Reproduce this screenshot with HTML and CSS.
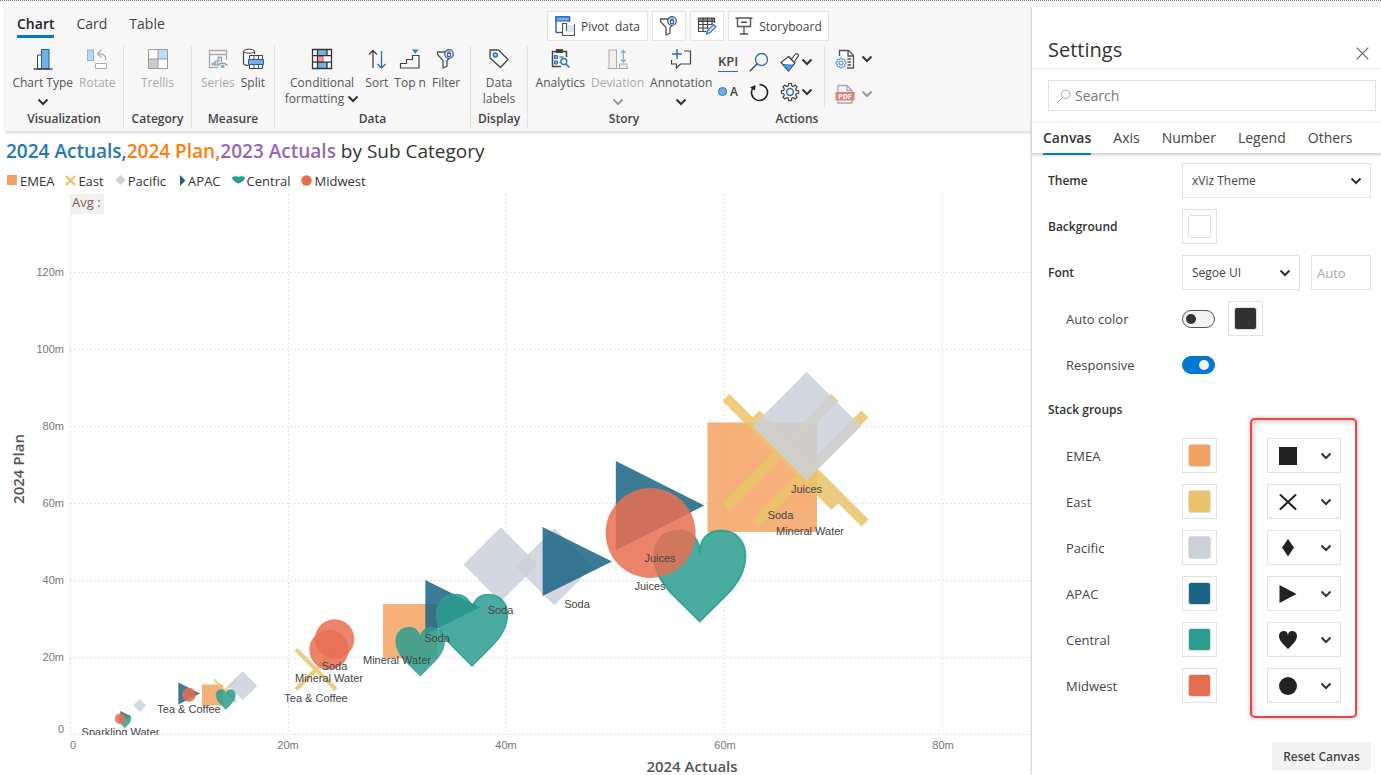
FILE: index.html
```html
<!DOCTYPE html>
<html lang="en">
<head>
<meta charset="utf-8">
<title>Chart settings</title>
<link rel="stylesheet" href="styles.css">
</head>
<body>
<svg class="defs" aria-hidden="true">
  <symbol id="chevron" viewBox="0 0 12 8"><path d="M1.500 1.500 6 6l4.500-4.500" fill="none" stroke="currentColor" stroke-width="2"/></symbol>
  <symbol id="lens" viewBox="0 0 20 20"><circle cx="12.500" cy="7.500" r="6" fill="none" stroke="var(--lens, #2b6cc4)" stroke-width="1.300"/><path d="M8.200 11.800.800 19.200" fill="none" stroke="currentColor" stroke-width="1.300"/></symbol>
  <symbol id="funnel" viewBox="0 0 20 20"><path d="M9 3H1.500v2.500L7 11.500V19l4-2v-5.500l2-2" fill="none" stroke="#555" stroke-width="1.300"/><circle cx="13" cy="5" r="4.300" fill="#dbe9f8" stroke="#555" stroke-width="1.200"/><path d="M11.500 4.500h3v3h-3zM12 4.500V3h2v1.500" fill="none" stroke="#2b6cc4" stroke-width="1.100"/></symbol>
  <symbol id="gear" viewBox="0 0 20 20"><path d="M8.700 1.500h2.600l.4 2.300 1.600.7 1.900-1.400 1.800 1.800-1.300 1.900.6 1.600 2.300.4v2.500l-2.300.4-.6 1.600 1.300 1.900-1.800 1.800-1.900-1.300-1.600.6-.4 2.300H8.700l-.4-2.300-1.600-.6L4.800 17 3 15.200l1.300-1.900-.6-1.600-2.300-.4V8.800l2.300-.4.6-1.600L3 4.900l1.800-1.800 1.900 1.400 1.600-.7z" fill="none" stroke="var(--gear, #444)" stroke-width="1.200"/><circle cx="10" cy="10" r="3.400" fill="none" stroke="#2b6cc4" stroke-width="1.500"/></symbol>
  <symbol id="heart" viewBox="0 0 100 100" overflow="visible" preserveAspectRatio="none"><path d="M50 25C50 10 58 0 73 0 90 0 100 12 100 28 100 48 87 64 75 75L50 100 25 75C13 64 0 48 0 28 0 12 10 0 27 0 42 0 50 10 50 25Z"/></symbol>
</svg>
<div class="page">
  <main class="report">
    <header class="ribbon">
      <div class="ribbon-top">
        <nav class="tabs">
          <button class="tab active">Chart</button>
          <button class="tab">Card</button>
          <button class="tab">Table</button>
        </nav>
        <div class="quick">
          <button class="quick-btn wide">
            <svg width="20" height="20" viewBox="0 0 20 20"><path d="M1 16.500V1h13.500v5" fill="#fff" stroke="#1f5fae" stroke-width="1.400"/><path d="M1 1h13.500v4H1z" fill="#6fb0e8" stroke="#1f5fae" stroke-width="1.200"/><path d="M1 16.500h6" stroke="#1f5fae" stroke-width="1.400"/><path d="M7.500 7.500h4v7h8v5h-12z" fill="#fff" stroke="#555" stroke-width="1.200"/><path d="M12 9h7v7h-7z" fill="#d5e8f8"/><path d="M19.500 8v11.500" stroke="#555"/></svg>
            <span>Pivot&nbsp; data</span>
          </button>
          <button class="quick-btn" aria-label="Filter"><svg width="20" height="20"><use href="#funnel"/></svg></button>
          <button class="quick-btn" aria-label="Edit table"><svg width="20" height="20" viewBox="0 0 20 20"><path d="M1.500 2h16v3.500h-16z" fill="#888"/><path d="M1.500 2v13.500h8M6 2v13.500M10.500 2v11M15 2v6M17.500 2v5M1.500 8.500h14M1.500 12h10M1.500 2h16M1.500 5.500h16" fill="none" stroke="#444" stroke-width="1.200"/><path d="m9.500 18 1-3.500 6-6 2.300 2.300-6 6z" fill="#cfe3f8" stroke="#2b6cc4" stroke-width="1.200"/></svg></button>
          <button class="quick-btn wide">
            <svg width="18" height="20" viewBox="0 0 18 20"><path d="M.5 2h17M2.500 2v8.500h13V2M9 10.500V18M5 18h8M6 6.300h6" fill="none" stroke="#555" stroke-width="1.400"/></svg>
            <span>Storyboard</span>
          </button>
        </div>
      </div>
      <div class="groups">
        <section class="group visualization">
          <div class="items">
            <button class="item"><svg width="20" height="22" viewBox="0 0 20 22"><path d="M4.500 7h4v14h-4z" fill="#fff" stroke="#444"/><path d="M8.500 1.500h7.500V21H8.500z" fill="#6fb0e8" stroke="#1f5fae"/><path d="M.5 21h19" stroke="#333" stroke-width="1.300"/></svg><span>Chart Type</span><svg class="chev"><use href="#chevron"/></svg></button>
            <button class="item off"><svg width="22" height="22" viewBox="0 0 22 22"><path d="M1.500 2h6v10.500h-6z" fill="#b9d8f2" stroke="#86b2dc"/><path d="M9.500 15.500h11v5h-11z" fill="#fff" stroke="#aaa"/><path d="M19.500 12c1-4-2-6.500-8-6.500m4-4-4 4 4 4" fill="none" stroke="#aaa" stroke-width="1.200"/></svg><span>Rotate</span></button>
          </div>
          <h2>Visualization</h2>
        </section>
        <section class="group category">
          <div class="items">
            <button class="item off"><svg width="22" height="22" viewBox="0 0 22 22"><path d="M1.500 1.500h19v19h-19z" fill="#fff"/><path d="M11 1.500h9.500V11H11z" fill="#c3ddf4"/><path d="M1.500 11H11v9.500H1.500z" fill="#ccc"/><path d="M1.500 1.500h19v19h-19zM11 1.500v19M1.500 11h19" fill="none" stroke="#999"/></svg><span>Trellis</span></button>
          </div>
          <h2>Category</h2>
        </section>
        <section class="group measure">
          <div class="items">
            <button class="item off"><svg width="22" height="22" viewBox="0 0 22 22"><path d="M19.500 12V2.500h-17v17H11M2.500 6.500h17" fill="none" stroke="#aaa" stroke-width="1.300"/><path d="M5 17v-2h3v2zM8 17v-4h3v4zM11 13v-4h3.500v5" fill="#c3ddf4" stroke="#8a9db0"/><path d="M11 17.500c2.500-3 7-3 9.500 0" fill="none" stroke="#999" stroke-width="1.300"/><circle cx="15.800" cy="18.500" r="1.800" fill="#7ba9d8"/></svg><span>Series</span></button>
            <button class="item"><svg width="22" height="22" viewBox="0 0 22 22"><path d="M1.500 3v12c0 1.500 1.500 2.500 5 2.500M12.500 3v3" fill="none" stroke="#444" stroke-width="1.200"/><ellipse cx="7" cy="3.200" rx="5.500" ry="2" fill="#fff" stroke="#444"/><path d="M7.500 7.500h13v13h-13z" fill="#fff" stroke="#444"/><path d="M12 7.500v13M16.500 7.500v13" stroke="#444"/><path d="M6.500 11.500h15v5h-15z" fill="#6fb0e8" stroke="#1f5fae"/></svg><span>Split</span></button>
          </div>
          <h2>Measure</h2>
        </section>
        <section class="group data">
          <div class="items">
            <button class="item"><svg width="22" height="22" viewBox="0 0 22 22"><path d="M1.500 1.500h19v19h-19z" fill="#fff"/><path d="M6.500 1.500h9.500v6H6.500zM6.500 14h9.500v6.500H6.500z" fill="#6fb4e8"/><path d="M6.500 8H12v6H6.500z" fill="#f59a9a" stroke="#e04848"/><path d="M1.500 1.500h19v19h-19zM1.500 7.700h19M1.500 14.200h19M6.500 1.500v19M16 1.500v6M16 14v6.500" fill="none" stroke="#333" stroke-width="1.300"/></svg><span>Conditional<br>formatting <svg class="chev"><use href="#chevron"/></svg></span></button>
            <button class="item"><svg width="18" height="22" viewBox="0 0 18 22"><path d="M5 20V2.500M1 6.500l4-4 4 4" fill="none" stroke="#444" stroke-width="1.300"/><path d="M13.500 3v17M9.500 16l4 4 4-4" fill="none" stroke="#2b6cc4" stroke-width="1.300"/></svg><span>Sort</span></button>
            <button class="item"><svg width="22" height="22" viewBox="0 0 22 22"><path d="M1.500 20v-4.500h6v-4h6v-4H20V20z" fill="none" stroke="#444" stroke-width="1.200"/><path d="M13 1.500h6.500l-3.200 4.300z" fill="#2b7ad0"/></svg><span>Top n</span></button>
            <button class="item"><svg width="20" height="22"><use href="#funnel"/></svg><span>Filter</span></button>
          </div>
          <h2>Data</h2>
        </section>
        <section class="group display">
          <div class="items">
            <button class="item"><svg width="22" height="22" viewBox="0 0 22 22"><path d="M2 2h8.500l9.500 9.500-7.500 8L2 10z" fill="none" stroke="#444" stroke-width="1.300" stroke-linejoin="round"/><circle cx="7.300" cy="7" r="2" fill="#9cc8f0" stroke="#2b6cc4" stroke-width="1.300"/></svg><span>Data<br>labels</span></button>
          </div>
          <h2>Display</h2>
        </section>
        <section class="group story">
          <div class="items">
            <button class="item"><svg width="22" height="22" viewBox="0 0 22 22"><path d="M17.500 9V3.500H3.500v15H12" fill="none" stroke="#444" stroke-width="1.500"/><path d="M7 1h7v4H7z" fill="#444"/><path d="M5.500 7.500h3v3h-3zM5.500 13h3v3h-3z" fill="#6fb0e8" stroke="#2b6cc4"/><path d="M10.500 9h4M10.500 14.500h1" stroke="#444" stroke-width="1.200"/><circle cx="14.800" cy="13.500" r="3" fill="#fff" stroke="#2b6cc4" stroke-width="1.300"/><path d="m17 16 3.500 3.500" stroke="#2b6cc4" stroke-width="1.500"/></svg><span>Analytics</span></button>
            <button class="item off"><svg width="22" height="22" viewBox="0 0 22 22"><path d="M2 2h7.500v18.500H2z" fill="#f0f0f0" stroke="#aaa"/><path d="M12.500 16h7.500v4.500h-7.500z" fill="#f0f0f0" stroke="#aaa"/><path d="M.5 20.500h21" stroke="#aaa"/><path d="M16.300 3v10.500M14 5l2.300-2.500L18.600 5M14 11.500l2.300 2.500 2.300-2.500" fill="none" stroke="#7ba9d8" stroke-width="1.200"/></svg><span>Deviation</span><svg class="chev"><use href="#chevron"/></svg></button>
            <button class="item"><svg width="22" height="22" viewBox="0 0 22 22"><path d="M14 3h6.500v13H10.500l-4 4v-4H1.500V12" fill="none" stroke="#444" stroke-width="1.200"/><path d="M7 1v10M2 6h10" stroke="#2b6cc4" stroke-width="1.400"/></svg><span>Annotation</span><svg class="chev"><use href="#chevron"/></svg></button>
          </div>
          <h2>Story</h2>
        </section>
        <section class="group actions">
          <div class="action-row">
            <div class="action-grid">
              <button class="kpi">KPI</button>
              <button class="act" aria-label="Zoom"><svg width="20" height="20"><use href="#lens"/></svg></button>
              <button class="act split" aria-label="Format"><svg width="20" height="20" viewBox="0 0 20 20"><path d="M1 10.500 8.500 4.500 15 11l-6.500 8z" fill="#fff" stroke="#444" stroke-width="1.200"/><path d="m2.500 12.500 10.800.7L8.500 19z" fill="#4f9be0" stroke="#2b6cc4"/><path d="m11.500 7 4-5c1-1.300 3.800.7 2.800 2.200L14.500 9.500M8.500 4.500 15 11" fill="#fff" stroke="#444" stroke-width="1.200"/></svg><svg class="chev"><use href="#chevron"/></svg></button>
              <button class="dot-a"><i></i>A</button>
              <button class="act" aria-label="Reset"><svg width="20" height="20" viewBox="0 0 20 20"><path d="M4.500 5.200A8 8 0 1 0 10.500 2.500" fill="none" stroke="#222" stroke-width="1.600"/><path d="M1 5.500 6.500 3l-.5 5.500z" fill="#222"/></svg></button>
              <button class="act split" aria-label="Options"><svg width="20" height="20"><use href="#gear"/></svg><svg class="chev"><use href="#chevron"/></svg></button>
            </div>
            <div class="export">
              <button class="act split" aria-label="Page options"><svg width="20" height="20" viewBox="0 0 20 20"><path d="M4.500 7V1.500h9l5 5v12.500H12M13 1.500v5.500h5.500M12.500 10H16M12.500 13H16M12.500 16H16" fill="none" stroke="#555" stroke-width="1.300"/><svg class="small-gear" x="0" y="8" width="12" height="12"><use href="#gear"/></svg></svg><svg class="chev"><use href="#chevron"/></svg></button>
              <button class="act split off" aria-label="Export PDF"><svg width="20" height="20" viewBox="0 0 20 20"><path d="M3 8V1.500h9l5 5V8M12 1.500v5h5M3 16v3h14v-3" fill="none" stroke="#aaa" stroke-width="1.300"/><path d="M.5 8h19v8.500H.5z" fill="#e0827a"/><text x="10" y="15" class="pdf">PDF</text></svg><svg class="chev"><use href="#chevron"/></svg></button>
            </div>
          </div>
          <h2>Actions</h2>
        </section>
      </div>
    </header>

    <h1 class="title"><b class="blue">2024 Actuals,</b><b class="orange">2024 Plan,</b><b class="purple">2023 Actuals</b> by Sub Category</h1>
    <ul class="legend">
      <li><svg width="11" height="11" viewBox="0 0 11 11"><path d="M0 0h10v10H0z" fill="#f4a261"/></svg>EMEA</li>
      <li><svg width="11" height="11" viewBox="0 0 11 11"><path d="m1 1 9 9M10 1l-9 9" stroke="#e9c46a" stroke-width="2.400"/></svg>East</li>
      <li><svg width="11" height="11" viewBox="0 0 11 11"><path d="m5.500 0 5 5-5 5-5-5z" fill="#cbd0d9"/></svg>Pacific</li>
      <li class="late"><svg width="7" height="11" viewBox="0 0 7 11"><path d="m1 0 5.500 5.500L1 11z" fill="#1a6484"/></svg>APAC</li>
      <li><svg width="13" height="11" viewBox="0 0 13 11"><path d="M6.500 2C7.500 1.200 11 1 13 2.200c0 3-3.500 5-6.500 6.300C3.500 7.200 0 5.200 0 2.200 2 1 5.500 1.200 6.500 2z" fill="#2a9d8f"/></svg>Central</li>
      <li><svg width="11" height="11" viewBox="0 0 11 11"><circle cx="5.500" cy="5.500" r="5.200" fill="#e76f51"/></svg>Midwest</li>
    </ul>

    <svg class="chart" viewBox="0 194 1032 580" role="img" aria-label="2024 Plan against 2024 Actuals by sub category">
      <defs><clipPath id="plot"><rect x="70" y="194" width="962" height="541"/></clipPath></defs>
      <path class="grid" d="M70.500 194V735M288.500 194V735M506.500 194V735M724.500 194V735M942.500 194V735M70 272.500H1032M70 349.500H1032M70 426.500H1032M70 503.500H1032M70 580.500H1032M70 657.500H1032M70 734.500H1032"/>
      <rect x="70" y="194" width="34" height="20" fill="#f2f1f1"/>
      <text x="72" y="207" class="avg">Avg :</text>
      <g class="tick end">
        <text x="64" y="276">120m</text><text x="64" y="353">100m</text><text x="64" y="430">80m</text><text x="64" y="507">60m</text><text x="64" y="584">40m</text><text x="64" y="661">20m</text><text x="64" y="733">0</text>
      </g>
      <g class="tick mid">
        <text x="73" y="749">0</text><text x="288" y="749">20m</text><text x="506" y="749">40m</text><text x="725" y="749">60m</text><text x="943" y="749">80m</text>
      </g>
      <text class="axis" x="692" y="772">2024 Actuals</text>
      <text class="axis" transform="translate(24 469) rotate(-90)">2024 Plan</text>
      <g class="marks">
        <path class="emea" d="M202 684.500h21v21h-21zM383 604h54.500v54.500H383zM707.500 422.500h109.500V532H707.500z"/>
        <path class="east x2" d="m214 679.500 22 22m0-22-22 22"/>
        <path class="east x4" d="m296 649.500 40 40m0-40-40 40"/>
        <path class="east x10" d="m726 397.500 109 109m0-109-109 109"/>
        <path class="east x10" d="m756 414 109 109m0-109-109 109"/>
        <path class="pacific" d="m139.700 699 6.500 6.500-6.500 6.500-6.500-6.500z"/>
        <path class="pacific" d="m242.700 671.200 14.500 14.500-14.500 14.500-14.500-14.500z"/>
        <path class="pacific" d="m500.700 527.300 37.200 37.200-37.200 37.200-37.200-37.200z"/>
        <path class="pacific" d="m554.300 528.200 38.600 38.600-38.600 38.600-38.600-38.600z"/>
        <path class="pacific" d="m806.700 371.800 54.500 54.500-54.500 54.500-54.500-54.500z"/>
        <path class="apac" d="m120.300 711 11 5.500-11 5.500z"/>
        <path class="apac" d="m178.300 682.500 21.700 11-21.700 11z"/>
        <path class="apac" d="m425.300 580 54.700 27.300-54.700 27.300z"/>
        <path class="apac" d="m542.600 527 69.400 34.500-69.400 34.500z"/>
        <path class="apac" d="m615.800 461 88.500 44.500-88.500 44.800z"/>
        <g class="central">
          <use href="#heart" x="118.500" y="715" width="12.500" height="13"/>
          <use href="#heart" x="216" y="689.500" width="19.500" height="20"/>
          <use href="#heart" x="396" y="627.500" width="48.500" height="48.500"/>
          <use href="#heart" x="436.500" y="594.500" width="71" height="71.500"/>
          <use href="#heart" x="654" y="530.500" width="91.500" height="91"/>
        </g>
        <g class="midwest">
          <circle cx="120.300" cy="718.700" r="5.500"/>
          <circle cx="189" cy="694.700" r="7"/>
          <circle cx="334.600" cy="639" r="19.700"/>
          <circle cx="329" cy="649.700" r="19.700"/>
          <circle cx="650.600" cy="533" r="45"/>
        </g>
      </g>
      <g class="names" clip-path="url(#plot)">
        <text x="120.500" y="736">Sparkling Water</text>
        <text x="189" y="713">Tea &amp; Coffee</text>
        <text x="334.500" y="670">Soda</text>
        <text x="329" y="682">Mineral Water</text>
        <text x="316" y="702">Tea &amp; Coffee</text>
        <text x="397" y="664">Mineral Water</text>
        <text x="437" y="642">Soda</text>
        <text x="500.500" y="614">Soda</text>
        <text x="577" y="608">Soda</text>
        <text x="660" y="562">Juices</text>
        <text x="650" y="590">Juices</text>
        <text x="806.500" y="493">Juices</text>
        <text x="780.500" y="519">Soda</text>
        <text x="810" y="535">Mineral Water</text>
      </g>
    </svg>
  </main>

  <aside class="panel">
    <header class="panel-head">
      <h2>Settings</h2>
      <button class="close" aria-label="Close"><svg width="13" height="13" viewBox="0 0 13 13"><path d="m.7.700 11.600 11.600M12.300.700.700 12.300" stroke="#666" stroke-width="1.200"/></svg></button>
    </header>
    <label class="search">
      <svg width="14" height="14"><use href="#lens"/></svg>
      <input type="search" placeholder="Search" aria-label="Search">
    </label>
    <nav class="panel-tabs">
      <button class="active">Canvas</button>
      <button>Axis</button>
      <button>Number</button>
      <button>Legend</button>
      <button>Others</button>
    </nav>
    <form class="settings">
      <div class="row"><label for="theme">Theme</label>
        <span class="select grow"><select id="theme"><option>xViz Theme</option></select><svg class="chev"><use href="#chevron"/></svg></span></div>
      <div class="row"><label for="bg">Background</label><input type="color" id="bg" value="#ffffff"></div>
      <div class="row"><label for="font">Font</label>
        <span class="select font"><select id="font"><option>Segoe UI</option></select><svg class="chev"><use href="#chevron"/></svg></span>
        <input class="size" type="text" placeholder="Auto" aria-label="Font size"></div>
      <div class="row sub"><label for="auto">Auto color</label><input type="checkbox" class="toggle" id="auto"><input type="color" class="after" value="#323232" aria-label="Font color"></div>
      <div class="row sub"><label for="resp">Responsive</label><input type="checkbox" class="toggle" id="resp" checked></div>
      <h3>Stack groups</h3>
      <div class="stack">
        <div class="row sub"><label for="c1">EMEA</label><input type="color" id="c1" value="#f4a261"><button type="button" class="shape" aria-label="EMEA marker"><svg width="18" height="18"><path d="M0 0h18v18H0z"/></svg><svg class="chev"><use href="#chevron"/></svg></button></div>
        <div class="row sub"><label for="c2">East</label><input type="color" id="c2" value="#e9c46a"><button type="button" class="shape" aria-label="East marker"><svg width="18" height="18"><path d="m1.500 2 15 14M16.500 2l-15 14" stroke="#222" stroke-width="2" stroke-linecap="round"/></svg><svg class="chev"><use href="#chevron"/></svg></button></div>
        <div class="row sub"><label for="c3">Pacific</label><input type="color" id="c3" value="#cbd0d9"><button type="button" class="shape" aria-label="Pacific marker"><svg width="18" height="18"><path d="m9 0 6 8.500L9 17.500 3 8.500z"/></svg><svg class="chev"><use href="#chevron"/></svg></button></div>
        <div class="row sub"><label for="c4">APAC</label><input type="color" id="c4" value="#1a6484"><button type="button" class="shape" aria-label="APAC marker"><svg width="18" height="18"><path d="M.5 0 17.500 9l-17 9z"/></svg><svg class="chev"><use href="#chevron"/></svg></button></div>
        <div class="row sub"><label for="c5">Central</label><input type="color" id="c5" value="#2a9d8f"><button type="button" class="shape" aria-label="Central marker"><svg width="18" height="18"><use href="#heart" width="18" height="18"/></svg><svg class="chev"><use href="#chevron"/></svg></button></div>
        <div class="row sub"><label for="c6">Midwest</label><input type="color" id="c6" value="#e76f51"><button type="button" class="shape" aria-label="Midwest marker"><svg width="18" height="18"><circle cx="9" cy="9" r="9"/></svg><svg class="chev"><use href="#chevron"/></svg></button></div>
        <div class="highlight"></div>
      </div>
      <button type="reset" class="reset">Reset Canvas</button>
    </form>
  </aside>
</div>
</body>
</html>
```
FILE: styles.css
```css
* { box-sizing: border-box; }
body {
  margin: 0;
  font-family: "Open Sans", "Noto Sans", sans-serif;
  font-size: 12px;
  color: #333;
  background: #fff;
}
button, input, select { font: inherit; color: inherit; margin: 0; }
button { background: none; border: 0; padding: 0; cursor: pointer; }
h1, h2, h3, ul { margin: 0; padding: 0; }
svg { display: block; flex: none; }
.defs { position: absolute; width: 0; height: 0; }
.chev { width: 12px; height: 8px; color: #333; }

.page { display: flex; border-top: 1px dotted #777; padding-top: 6px; min-height: 100vh; }
.report { flex: 1; min-width: 0; }

/* Ribbon */
.ribbon { margin-left: 5px; height: 124px; background: #f7f7f7; box-shadow: 0 2px 3px #d8d8d8; }
.ribbon-top { display: flex; height: 37px; }
.tabs { display: flex; gap: 22px; flex: 0 0 542px; padding-left: 12px; }
.tab { font-size: 14px; height: 31px; padding-top: 4px; border-bottom: 3px solid transparent; color: #444; }
.tab.active { font-weight: 600; color: #222; border-color: #0078d7; }
.quick { display: flex; gap: 4px; padding-top: 4px; }
.quick-btn { display: flex; align-items: center; justify-content: center; gap: 6px; width: 34px; height: 30px; background: #fff; border: 1px solid #e4e4e4; color: #444; }
.quick-btn.wide { width: 101px; }

.groups { display: flex; height: 84px; padding-top: 2px; }
.group { display: flex; flex-direction: column; flex: none; height: 82px; border-right: 1px solid #e0e0e0; }
.group h2 { margin-top: auto; line-height: 18px; font-size: 12px; font-weight: 600; text-align: center; color: #444; }
.visualization { width: 119px; }
.category { width: 68px; }
.measure { width: 83px; }
.data { width: 196px; }
.display { width: 57px; }
.story { width: 192px; border: 0; }
.actions { width: 154px; border: 0; }
.items { display: flex; justify-content: center; gap: 6px; padding-top: 2px; }
.item { display: flex; flex-direction: column; align-items: center; line-height: 16px; color: #555; white-space: nowrap; font-size: 12px; }
.item > span { margin-top: 5px; }
.item > .chev { margin-top: 7px; }
.item span .chev { display: inline-block; }
.off { color: #aaa; }
.off .chev { color: #999; }
.action-row { display: flex; height: 61px; margin-left: -2px; }
.action-grid { display: grid; grid-template-columns: 20px 20px 34px; gap: 10px 11px; align-content: center; width: 107px; border-right: 1px solid #e0e0e0; }
.kpi { font-size: 13px; font-weight: 600; line-height: 18px; border-bottom: 1px solid #2b6cc4; display: flex; justify-content: center; color: #444; }
.dot-a { display: flex; align-items: center; gap: 3px; font-weight: 600; color: #444; }
.dot-a i { flex: none; width: 9px; height: 9px; border: 1px solid #2b6cc4; border-radius: 50%; background: #6fb0e8; }
.act { display: flex; align-items: center; color: #444; height: 20px; }
.split { gap: 1px; }
.export { display: flex; flex-direction: column; justify-content: center; gap: 15px; padding-left: 10px; }
.export .split { gap: 6px; }
.small-gear { --gear: #2b6cc4; }
.pdf { font-size: 7px; font-weight: 700; fill: #fff; text-anchor: middle; }

/* Chart */
.title { margin: 6px 0 0 6px; font-size: 19px; line-height: 28px; font-weight: 400; white-space: nowrap; }
.title b { font-weight: 600; }
.blue { color: #1f77b4; }
.orange { color: #ff7f0e; }
.purple { color: #9467bd; }
.legend { display: flex; gap: 9px; list-style: none; padding: 7px 0 0 7px; height: 29px; font-size: 13px; line-height: 18px; }
.legend li { display: flex; align-items: flex-start; gap: 2px; padding-right: 2px; }
.legend .late { padding-left: 2px; }
.legend svg { margin-top: 3px; }
.chart { width: 100%; height: auto; overflow: visible; }
.grid { fill: none; stroke: #e3e3e3; stroke-dasharray: 2 2; }
.avg { font-size: 13px; fill: #8b5a55; }
.tick { font: 11px "Liberation Sans", Arial, sans-serif; fill: #777; }
.end { text-anchor: end; }
.mid, .axis, .names { text-anchor: middle; }
.axis { font-size: 15px; font-weight: 600; fill: #555; }
.names { font: 11px "Liberation Sans", Arial, sans-serif; fill: #444; }
.marks { fill-opacity: .85; stroke-opacity: .85; }
.emea { fill: #f4a261; }
.east { fill: none; stroke: #e9c46a; }
.x2 { stroke-width: 2; }
.x4 { stroke-width: 4; }
.x10 { stroke-width: 10; }
.pacific { fill: #cbd0d9; }
.apac { fill: #1a6484; }
.central { fill: #2a9d8f; stroke: #2a9d8f; stroke-width: 2; }
.midwest { fill: #e76f51; }

/* Settings panel */
.panel { flex: 0 0 349px; min-width: 0; display: flex; flex-direction: column; background: #fff; box-shadow: -1px 0 2px #ccc; z-index: 1; }
.panel-head { display: flex; justify-content: space-between; height: 62px; padding: 27px 12px 0 16px; border-bottom: 1px solid #e8e8e8; }
.panel-head h2 { font-size: 20px; line-height: 32px; font-weight: 400; }
.close { height: 38px; }
.search { display: flex; align-items: center; gap: 4px; height: 31px; margin: 11px 5px 10px 16px; padding: 0 8px; border: 1px solid #e2e2e2; color: #999; --lens: #999; }
.search input { flex: 1; min-width: 0; border: 0; outline: 0; font-size: 14px; padding: 0; color: #333; background: none; }
.search input::placeholder { color: #777; }
.panel-tabs { display: flex; gap: 22px; height: 32px; padding-left: 11px; border-top: 1px solid #f2f2f2; box-shadow: 0 2px 3px #ccc; font-size: 14px; color: #444; }
.panel-tabs button { height: 33px; border-bottom: 2px solid transparent; }
.panel-tabs .active { font-weight: 600; border-color: #0078d7; color: #333; }
.settings { display: flex; flex-direction: column; padding: 10px 10px 0 16px; font-size: 13px; color: #444; }
.row { display: flex; align-items: center; min-height: 35px; margin-bottom: 11px; }
.row label { flex: 0 0 134px; font-weight: 600; font-size: 12px; color: #333; }
.row.sub label { padding-left: 18px; font-weight: 400; font-size: 13px; color: #444; }
.settings h3 { font-size: 12px; line-height: 34px; margin-bottom: 11px; font-weight: 600; color: #333; }
.select { display: flex; align-items: center; height: 35px; border: 1px solid #e2e2e2; padding-right: 8px; }
.select select { flex: 1; min-width: 0; height: 33px; appearance: none; border: 0; background: none; padding: 0 9px; font-size: 12px; }
.grow { flex: 1; }
.font { width: 118px; margin-right: 11px; }
.size { flex: 1; min-width: 0; height: 35px; border: 1px solid #e2e2e2; padding: 0 5px; }
.size::placeholder { color: #aaa; }
input[type="color"] { appearance: none; width: 35px; height: 35px; padding: 5px; border: 1px solid #e2e2e2; background: #fff; }
input[type="color"]::-webkit-color-swatch-wrapper { padding: 0; }
input[type="color"]::-webkit-color-swatch { border: 1px solid #ddd; border-radius: 3px; }
.after { margin-left: 13px; }
.toggle { appearance: none; width: 33px; height: 18px; padding: 3px; border: 1px solid #555; border-radius: 9px; background: #f4f4f4; }
.toggle::before { content: ""; display: block; width: 10px; height: 10px; border-radius: 50%; background: #333; }
.toggle:checked { background: #0078d7; border-color: #0078d7; padding-left: 16px; }
.toggle:checked::before { background: #f4f4f4; }
.stack { position: relative; }
.shape { display: flex; align-items: center; justify-content: space-between; width: 74px; height: 35px; margin-left: 50px; padding: 0 8px 0 11px; border: 1px solid #e2e2e2; fill: #222; }
.highlight { position: absolute; top: -20px; bottom: -4px; right: 14px; width: 107px; border: 2px solid #ee4444; border-radius: 5px; box-shadow: 0 0 4px #bbb, inset 2px 2px 4px #ccc; pointer-events: none; }
.reset { align-self: flex-end; width: 99px; height: 29px; margin-top: 28px; background: #f3f3f3; border-radius: 2px; font-size: 12px; font-weight: 600; }
```
